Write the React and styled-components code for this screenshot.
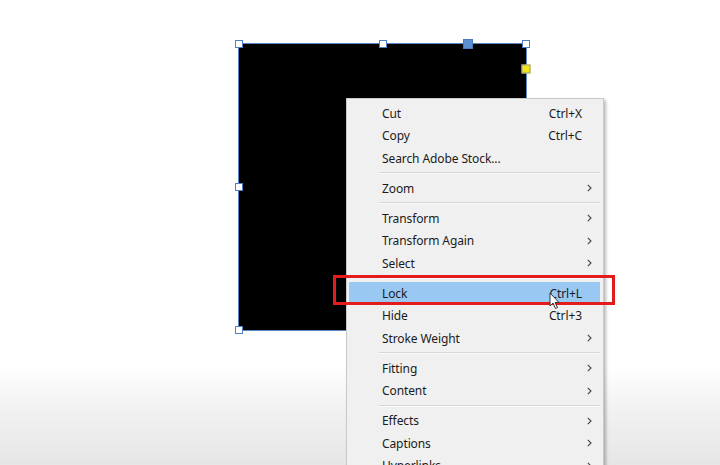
import React from "react";
import styled, { createGlobalStyle } from "styled-components";

const Global = createGlobalStyle`
  html, body { margin: 0; padding: 0; }
  body { width: 720px; height: 465px; overflow: hidden; font-family: "Noto Sans", "Open Sans", sans-serif; }
`;

const Canvas = styled.div`
  position: relative;
  width: 720px;
  height: 465px;
  overflow: hidden;
  background: linear-gradient(to bottom, #ffffff 0px, #ffffff 365px, #f1f1f1 410px, #e6e6e6 465px);
`;

const Frame = styled.div`
  position: absolute;
  left: 239px;
  top: 44px;
  width: 287px;
  height: 286px;
  background: #000;
  outline: 1px solid #5a86c4;
`;

const Handle = styled.div`
  position: absolute;
  width: ${(p) => p.$size || 6}px;
  height: ${(p) => p.$size || 6}px;
  left: ${(p) => p.$x};
  top: ${(p) => p.$y};
  transform: translate(-50%, -50%);
  background: ${(p) => p.$fill || "#fff"};
  border: 1px solid ${(p) => p.$border || "#4f7fc0"};
`;

const Menu = styled.div`
  position: absolute;
  left: 346px;
  top: 98px;
  box-sizing: border-box;
  width: 258px;
  padding: 3px 3px 0 2px;
  background: #f0f0f0;
  border: 1px solid #c9c9c9;
  box-shadow: 2px 2px 3px rgba(0, 0, 0, 0.28);
  display: flex;
  flex-direction: column;
`;

const Row = styled.div`
  height: 22.5px;
  display: grid;
  grid-template-columns: 1fr auto 18px;
  align-items: center;
  padding-left: 33px;
  font-size: 12px;
  color: #1b1b1b;
  background: ${(p) => (p.$active ? "#99c8f2" : "transparent")};
  letter-spacing: -0.1px;
`;

const Label = styled.span`
  white-space: nowrap;
`;

const Shortcut = styled.span`
  white-space: nowrap;
  text-align: right;
`;

const Arrow = styled.span`
  display: flex;
  align-items: center;
  justify-content: flex-start;
  padding-left: 5px;
`;

const Sep = styled.div`
  height: 7.5px;
  display: flex;
  align-items: center;
  padding-left: 30px;
  &::after {
    content: "";
    flex: 1;
    height: 1px;
    background: #d6d6d6;
    border-bottom: 1px solid #fafafa;
  }
`;

const Highlight = styled.div`
  position: absolute;
  left: 333px;
  top: 275px;
  width: 276px;
  height: 24px;
  border: 3.5px solid #e31b1b;
`;

const Cursor = styled.svg`
  position: absolute;
  left: 549px;
  top: 292px;
`;

const Chevron = () => (
  <svg width="5" height="8" viewBox="0 0 5 8">
    <polyline points="0.8,0.8 4,4 0.8,7.2" fill="none" stroke="#444" strokeWidth="1.1" />
  </svg>
);

const items = [
  { l: "Cut", s: "Ctrl+X" },
  { l: "Copy", s: "Ctrl+C" },
  { l: "Search Adobe Stock..." },
  "sep",
  { l: "Zoom", sub: true },
  "sep",
  { l: "Transform", sub: true },
  { l: "Transform Again", sub: true },
  { l: "Select", sub: true },
  "sep",
  { l: "Lock", s: "Ctrl+L", active: true },
  { l: "Hide", s: "Ctrl+3" },
  { l: "Stroke Weight", sub: true },
  "sep",
  { l: "Fitting", sub: true },
  { l: "Content", sub: true },
  "sep",
  { l: "Effects", sub: true },
  { l: "Captions", sub: true },
  { l: "Hyperlinks", sub: true },
];

const handles = [
  { x: "0%", y: "0%" },
  { x: "50%", y: "0%" },
  { x: "79.8%", y: "0%", size: 8, fill: "#5b8fd0", border: "#4a7cc0" },
  { x: "100%", y: "0%" },
  { x: "0%", y: "50%" },
  { x: "0%", y: "100%" },
  { x: "100%", y: "8.8%", size: 7, fill: "#f2e21a", border: "#9a9a9a" },
];

export default function App() {
  return (
    <>
      <Global />
      <Canvas>
        <Frame>
          {handles.map((h, i) => (
            <Handle key={i} $x={h.x} $y={h.y} $size={h.size} $fill={h.fill} $border={h.border} />
          ))}
        </Frame>
        <Menu>
          {items.map((it, i) =>
            it === "sep" ? (
              <Sep key={i} />
            ) : (
              <Row key={i} $active={it.active}>
                <Label>{it.l}</Label>
                <Shortcut>{it.s || ""}</Shortcut>
                <Arrow>{it.sub ? <Chevron /> : null}</Arrow>
              </Row>
            )
          )}
        </Menu>
        <Highlight />
        <Cursor width="12" height="18" viewBox="0 0 12 18">
          <path d="M1 1 L1 14 L4 11 L6.5 16.5 L8.5 15.5 L6 10.5 L10 10.5 Z" fill="#fff" stroke="#333" strokeWidth="1" strokeLinejoin="round" />
        </Cursor>
      </Canvas>
    </>
  );
}
